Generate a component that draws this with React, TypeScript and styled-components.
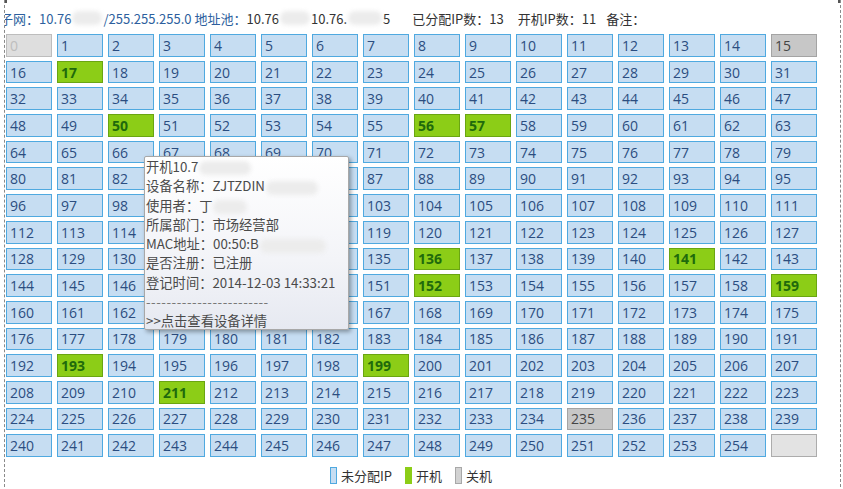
import React from 'react'
import styled, { createGlobalStyle, css } from 'styled-components'

const GlobalStyle = createGlobalStyle`
  html, body {
    margin: 0;
    padding: 0;
    background: #ffffff;
  }
  body {
    font-family: 'Open Sans', 'Noto Sans CJK SC', sans-serif;
    font-size: 13px;
  }
`

const Frame = styled.div`
  position: relative;
  margin-left: 4px;
  width: 835px;
  height: 487px;
  border-left: 1px dashed #8a8a8a;
  border-right: 1px dashed #8a8a8a;
  overflow: hidden;
  display: flex;
  flex-direction: column;
`

const Corner = styled.div<{ $side: 'left' | 'right' }>`
  position: absolute;
  top: 0;
  ${(p) => (p.$side === 'left' ? 'left: -1px;' : 'right: -1px;')}
  width: 3px;
  height: 3px;
  background: #555;
`

const Header = styled.div`
  display: flex;
  align-items: center;
  height: 16px;
  margin: 10px 0 8px -5px;
  white-space: nowrap;
  color: #333;
  font-family: 'Noto Sans CJK SC', 'Open Sans', sans-serif;
  font-size: 13px;
`

const Blue = styled.span`
  color: #2d5f9e;
`

const Gap = styled.span<{ $w: number }>`
  display: inline-block;
  width: ${(p) => p.$w}px;
`

const Smudge = styled.span<{ $w: number }>`
  display: inline-block;
  width: ${(p) => p.$w}px;
  height: 14px;
  margin: 0 1px;
  border-radius: 7px;
  background: #ececec;
  filter: blur(2px);
  vertical-align: middle;
`

const Grid = styled.div`
  position: relative;
  display: grid;
  grid-template-columns: repeat(16, 46px);
  grid-auto-rows: 22.7px;
  column-gap: 5px;
  row-gap: 4px;
  margin-left: 1px;
`

type Kind = 'free' | 'on' | 'off' | 'reserved' | 'empty'

const kindStyles = {
  free: css`
    background: #c6ddf2;
    border-color: #4fa9e0;
    color: #2b4d80;
  `,
  on: css`
    background: #8ccd17;
    border-color: #6aa512;
    color: #1f6a0c;
    font-weight: bold;
  `,
  off: css`
    background: #c7c7c7;
    border-color: #a4a4a4;
    color: #454545;
  `,
  reserved: css`
    background: #dedede;
    border-color: #bdbdbd;
    color: #bdbdbd;
  `,
  empty: css`
    background: #e3e3e3;
    border-color: #acacac;
    color: transparent;
  `,
}

const Cell = styled.div<{ $kind: Kind }>`
  box-sizing: border-box;
  display: flex;
  align-items: center;
  padding-left: 3px;
  border: 1px solid;
  font-family: 'Open Sans', sans-serif;
  font-size: 14px;
  ${(p) => kindStyles[p.$kind]}
`

// hover card for the ip under the pointer
const Tip = styled.div`
  position: absolute;
  left: 138px;
  top: 122px;
  width: 205px;
  height: 174px;
  box-sizing: border-box;
  padding: 0 0 0 1px;
  background: linear-gradient(#ffffff, #f3f4f8 60%, #e6e9f1);
  border: 1px solid #a8a8a8;
  border-radius: 2px;
  box-shadow: 2px 2px 4px rgba(0, 0, 0, 0.35);
  color: #4a4a4a;
  font-family: 'Noto Sans CJK SC', 'Open Sans', sans-serif;
  font-size: 13.3px;
  line-height: 19.3px;
  white-space: nowrap;
  overflow: hidden;
`

const TipLine = styled.div``

const Dashes = styled.div`
  letter-spacing: 0.5px;
  color: #777;
`

const Legend = styled.div`
  display: flex;
  align-items: center;
  justify-content: center;
  gap: 4px;
  margin-top: 9px;
  padding-right: 14px;
  color: #333;
  font-family: 'Noto Sans CJK SC', sans-serif;
  font-size: 13px;
`

const Swatch = styled.span<{ $bg: string; $bd: string }>`
  display: inline-block;
  width: 5px;
  height: 15px;
  background: ${(p) => p.$bg};
  border: 1px solid ${(p) => p.$bd};
`

const LegendText = styled.span`
  margin-right: 9px;
`

const onSet = new Set([17, 50, 56, 57, 136, 141, 152, 159, 193, 199, 211])
const offSet = new Set([15, 235])

const kindOf = (n: number): Kind => {
  if (n === 0) return 'reserved'
  if (n === 255) return 'empty'
  if (onSet.has(n)) return 'on'
  if (offSet.has(n)) return 'off'
  return 'free'
}

export default function App() {
  const cells = Array.from({ length: 256 }, (_, i) => i)
  return (
    <>
      <GlobalStyle />
      <Frame>
        <Corner $side="left" />
        <Corner $side="right" />
        <Header>
          <Blue>子网：10.76</Blue>
          <Smudge $w={30} />
          <Blue>/255.255.255.0 地址池：</Blue>
          10.76
          <Smudge $w={30} />
          10.76.
          <Smudge $w={34} />5<Gap $w={22} />
          已分配IP数：13<Gap $w={14} />
          开机IP数：11<Gap $w={10} />
          备注：
        </Header>
        <Grid>
          {cells.map((n) => (
            <Cell key={n} $kind={kindOf(n)}>
              {n}
            </Cell>
          ))}
          <Tip>
            <TipLine>
              开机10.7
              <Smudge $w={52} />
            </TipLine>
            <TipLine>
              设备名称：ZJTZDIN
              <Smudge $w={52} />
            </TipLine>
            <TipLine>
              使用者：丁
              <Smudge $w={34} />
            </TipLine>
            <TipLine>所属部门：市场经营部</TipLine>
            <TipLine>
              MAC地址：00:50:B
              <Smudge $w={66} />
            </TipLine>
            <TipLine>是否注册：已注册</TipLine>
            <TipLine>登记时间：2014-12-03 14:33:21</TipLine>
            <Dashes>------------------------</Dashes>
            <TipLine>&gt;&gt;点击查看设备详情</TipLine>
          </Tip>
        </Grid>
        <Legend>
          <Swatch $bg="#c6ddf2" $bd="#4fa9e0" />
          <LegendText>未分配IP</LegendText>
          <Swatch $bg="#8ccd17" $bd="#8ccd17" />
          <LegendText>开机</LegendText>
          <Swatch $bg="#d2d2d2" $bd="#a8a8a8" />
          <LegendText>关机</LegendText>
        </Legend>
      </Frame>
    </>
  )
}
